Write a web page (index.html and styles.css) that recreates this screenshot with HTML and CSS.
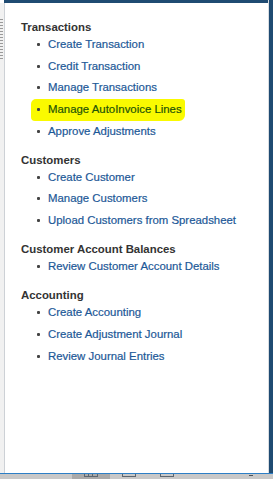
FILE: index.html
```html
<!DOCTYPE html>
<html>
    <head>
        <title>Tasks</title>
        <link rel="stylesheet" href="styles.css">
    </head>
    <body>
        <div class="frame">
            <div class="topbar"></div>
            <div class="main">
                <div class="gutter">
                    <div class="ticks"></div>
                </div>
                <div class="panel">
                    <div class="section">
                        <div class="heading">Transactions</div>
                        <ul class="tasks">
                            <li><a href="#">Create Transaction</a></li>
                            <li><a href="#">Credit Transaction</a></li>
                            <li><a href="#">Manage Transactions</a></li>
                            <li class="marked"><a href="#">Manage AutoInvoice Lines</a></li>
                            <li><a href="#">Approve Adjustments</a></li>
                        </ul>
                    </div>
                    <div class="section">
                        <div class="heading">Customers</div>
                        <ul class="tasks">
                            <li><a href="#">Create Customer</a></li>
                            <li><a href="#">Manage Customers</a></li>
                            <li><a href="#">Upload Customers from Spreadsheet</a></li>
                        </ul>
                    </div>
                    <div class="section">
                        <div class="heading">Customer Account Balances</div>
                        <ul class="tasks">
                            <li><a href="#">Review Customer Account Details</a></li>
                        </ul>
                    </div>
                    <div class="section">
                        <div class="heading">Accounting</div>
                        <ul class="tasks">
                            <li><a href="#">Create Accounting</a></li>
                            <li><a href="#">Create Adjustment Journal</a></li>
                            <li><a href="#">Review Journal Entries</a></li>
                        </ul>
                    </div>
                </div>
                <div class="edge"></div>
            </div>
            <div class="statusbar">
                <div class="spacer"></div>
                <div class="tab active"><span class="glyph split"></span></div>
                <div class="tab"><span class="glyph"></span></div>
                <div class="tab"><span class="glyph"></span></div>
                <div class="fill"><span class="dash"></span></div>
            </div>
        </div>
    </body>
</html>
```

FILE: styles.css
```css
body {
    margin: 0;
    font-family: "Liberation Sans", Arial, sans-serif;
    font-size: 11.4px;
    background: #ffffff;
    overflow: hidden;
}
.frame {
    display: flex;
    flex-direction: column;
    width: 273px;
    height: 479px;
}
.topbar {
    height: 3px;
    margin-left: 4px;
    background: #1f4b72;
}
.main {
    display: flex;
    flex: 1;
}
.gutter {
    width: 4px;
    background: #f1f1f1;
    border-right: 1px solid #cdd1d6;
}
.ticks {
    margin-top: 16px;
    width: 3px;
    height: 42px;
    background: repeating-linear-gradient(to bottom, #9a9a9a 0, #9a9a9a 1px, #f1f1f1 1px, #f1f1f1 3px);
}
.panel {
    flex: 1;
    padding: 17px 0 0 16px;
}
.edge {
    width: 4px;
    margin-top: -3px;
    background: #1f4b72;
    border-left: 1px solid #d8dde2;
}
.section + .section {
    margin-top: 14px;
}
.heading {
    font-weight: bold;
    color: #333333;
    line-height: 15px;
}
.tasks {
    list-style: none;
    margin: 2px 0 0 0;
    padding: 0 0 0 16px;
}
.tasks li {
    display: flex;
    align-items: center;
    line-height: 15px;
}
.tasks li + li {
    margin-top: 6.7px;
}
.tasks li::before {
    content: "";
    width: 3px;
    height: 3px;
    border-radius: 1px;
    background: #444444;
    margin-right: 8px;
}
.tasks a {
    color: #1c5897;
    text-decoration: none;
    -webkit-text-stroke: 0.2px #1c5897;
}
.tasks li.marked {
    width: fit-content;
    margin: 3.2px 0 -3.5px -6px;
    padding: 3.5px 3px 3.5px 6px;
    background: #fafa00;
    border-radius: 5px 3px 6px 4px;
}
.tasks li.marked a {
    color: #1f5408;
    -webkit-text-stroke: 0.2px #1f5408;
}
.statusbar {
    display: flex;
    height: 5px;
    border-top: 1px solid #2d7fc6;
    background: #c8c8c8;
}
.spacer {
    width: 72px;
}
.tab {
    width: 38px;
    display: flex;
    justify-content: center;
}
.tab.active {
    background: #a9a9a9;
}
.glyph {
    width: 12px;
    height: 2px;
    border: 1px solid #5c6670;
    border-top: none;
}
.glyph.split {
    background: linear-gradient(to right, transparent 3px, #5c6670 3px, #5c6670 4px, transparent 4px, transparent 7px, #5c6670 7px, #5c6670 8px, transparent 8px);
}
.fill {
    flex: 1;
    display: flex;
    justify-content: flex-end;
    padding-right: 20px;
}
.dash {
    width: 4px;
    height: 1px;
    margin-top: 1px;
    background: #4a5058;
}
```
